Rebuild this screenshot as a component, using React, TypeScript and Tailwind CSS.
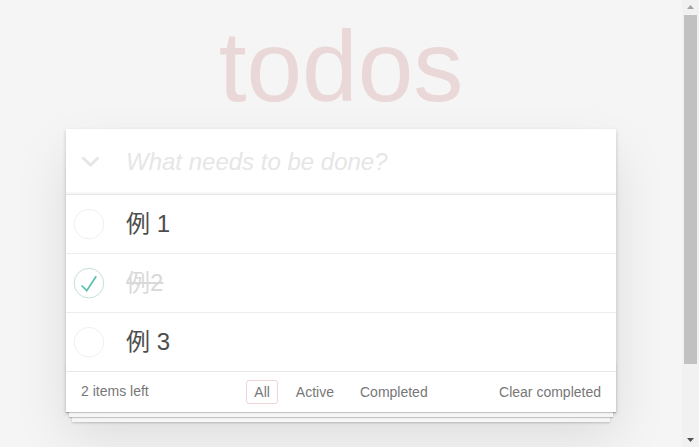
import { useState } from "react";

type Todo = { id: number; title: string; done: boolean };

const INITIAL: Todo[] = [
  { id: 1, title: "例 1", done: false },
  { id: 2, title: "例2", done: true },
  { id: 3, title: "例 3", done: false },
];

const FILTERS = ["All", "Active", "Completed"] as const;
type Filter = (typeof FILTERS)[number];

function Toggle({ done }: { done: boolean }) {
  return (
    <svg width="40" height="40" viewBox="-10 -18 100 135" className="shrink-0">
      <circle
        cx="50"
        cy="50"
        r="50"
        fill="none"
        stroke={done ? "#bddad5" : "#ededed"}
        strokeWidth="3"
      />
      {done && <path fill="#5dc2af" d="M72 25L42 71 27 56l-4 4 20 20 34-52z" />}
    </svg>
  );
}

// the window's classic scrollbar, page scrolled to the top
function Scrollbar() {
  return (
    <div className="flex w-[17px] shrink-0 flex-col items-center bg-[#f1f1f1]">
      <div className="flex h-[15px] w-full justify-center pt-[5px]">
        <svg width="7" height="4" viewBox="0 0 7 4">
          <polygon points="0,4 3.5,0 7,4" fill="#a3a3a3" />
        </svg>
      </div>
      <div className="h-[349px] w-[13px] bg-[#c1c1c1]" />
      <div className="flex-1" />
      <div className="flex h-[17px] w-full justify-center pt-[8px]">
        <svg width="7" height="4" viewBox="0 0 7 4">
          <polygon points="0,0 7,0 3.5,4" fill="#505050" />
        </svg>
      </div>
    </div>
  );
}

export default function App() {
  const [todos, setTodos] = useState<Todo[]>(INITIAL);
  const [filter, setFilter] = useState<Filter>("All");
  const [draft, setDraft] = useState("");

  const left = todos.filter((t) => !t.done).length;
  const shown = todos.filter((t) =>
    filter === "All" ? true : filter === "Active" ? !t.done : t.done
  );

  return (
    <div className="flex h-screen overflow-hidden bg-[#f5f5f5] text-[14px] leading-[1.4em] text-[#4d4d4d] [font-family:'Liberation_Sans','Noto_Sans_CJK_JP',sans-serif]">
      <div className="min-w-0 flex-1">
        <div className="mx-auto w-[550px] pt-[16px]">
          <h1 className="h-[100px] text-center text-[100px] leading-[100px] font-thin text-[rgba(175,47,47,0.15)]">
            todos
          </h1>

          <section className="relative mt-[13px] bg-white shadow-[0_2px_4px_0_rgba(0,0,0,0.2),0_25px_50px_0_rgba(0,0,0,0.1)]">
            <header className="flex h-[65px] items-center shadow-[inset_0_-2px_1px_rgba(0,0,0,0.03)]">
              <button
                type="button"
                onClick={() => {
                  const all = todos.every((t) => t.done);
                  setTodos(todos.map((t) => ({ ...t, done: !all })));
                }}
                className="flex h-full w-[60px] shrink-0 items-center pl-[15px]"
              >
                <svg width="19" height="11" viewBox="0 0 19 11">
                  <polyline
                    points="1.5,1.5 9.5,9 17.5,1.5"
                    fill="none"
                    stroke="#e6e6e6"
                    strokeWidth="3"
                  />
                </svg>
              </button>
              <input
                value={draft}
                onChange={(e) => setDraft(e.target.value)}
                onKeyDown={(e) => {
                  if (e.key === "Enter" && draft.trim()) {
                    setTodos([...todos, { id: Date.now(), title: draft.trim(), done: false }]);
                    setDraft("");
                  }
                }}
                placeholder="What needs to be done?"
                className="h-full min-w-0 flex-1 bg-transparent pr-4 text-[24px] font-light text-[#4d4d4d] outline-none placeholder:italic placeholder:text-[#e6e6e6]"
              />
            </header>

            <ul className="border-t border-[#e6e6e6]">
              {shown.map((t) => (
                <li
                  key={t.id}
                  className="flex h-[59px] items-center border-b border-[#ededed] last:h-[58px] last:border-b-0"
                >
                  <button
                    type="button"
                    onClick={() =>
                      setTodos(todos.map((x) => (x.id === t.id ? { ...x, done: !x.done } : x)))
                    }
                    className="flex w-[60px] shrink-0"
                  >
                    <Toggle done={t.done} />
                  </button>
                  <label
                    className={`text-[24px] leading-[1.2] ${
                      t.done ? "text-[#d9d9d9] line-through" : "text-[#4d4d4d]"
                    }`}
                  >
                    {t.title}
                  </label>
                </li>
              ))}
            </ul>

            <footer className="relative grid h-[41px] grid-cols-[1fr_auto_1fr] items-center border-t border-[#e6e6e6] px-[15px] text-[#777]">
              <div className="pointer-events-none absolute inset-x-0 bottom-0 h-[50px] overflow-hidden shadow-[0_1px_1px_rgba(0,0,0,0.2),0_8px_0_-3px_#f6f6f6,0_9px_1px_-3px_rgba(0,0,0,0.2),0_16px_0_-6px_#f6f6f6,0_17px_2px_-6px_rgba(0,0,0,0.2)]" />
              <span className="relative">
                <strong className="font-light">{left}</strong> items left
              </span>
              <ul className="relative flex gap-[4px]">
                {FILTERS.map((f) => (
                  <li key={f}>
                    <button
                      type="button"
                      onClick={() => setFilter(f)}
                      className={`m-[3px] block rounded-[3px] border px-[7px] py-[3px] leading-[16px] ${
                        filter === f ? "border-[rgba(175,47,47,0.2)]" : "border-transparent"
                      }`}
                    >
                      {f}
                    </button>
                  </li>
                ))}
              </ul>
              <button
                type="button"
                onClick={() => setTodos(todos.filter((t) => !t.done))}
                className="relative justify-self-end leading-[20px]"
              >
                Clear completed
              </button>
            </footer>
          </section>
        </div>
      </div>
      <Scrollbar />
    </div>
  );
}
